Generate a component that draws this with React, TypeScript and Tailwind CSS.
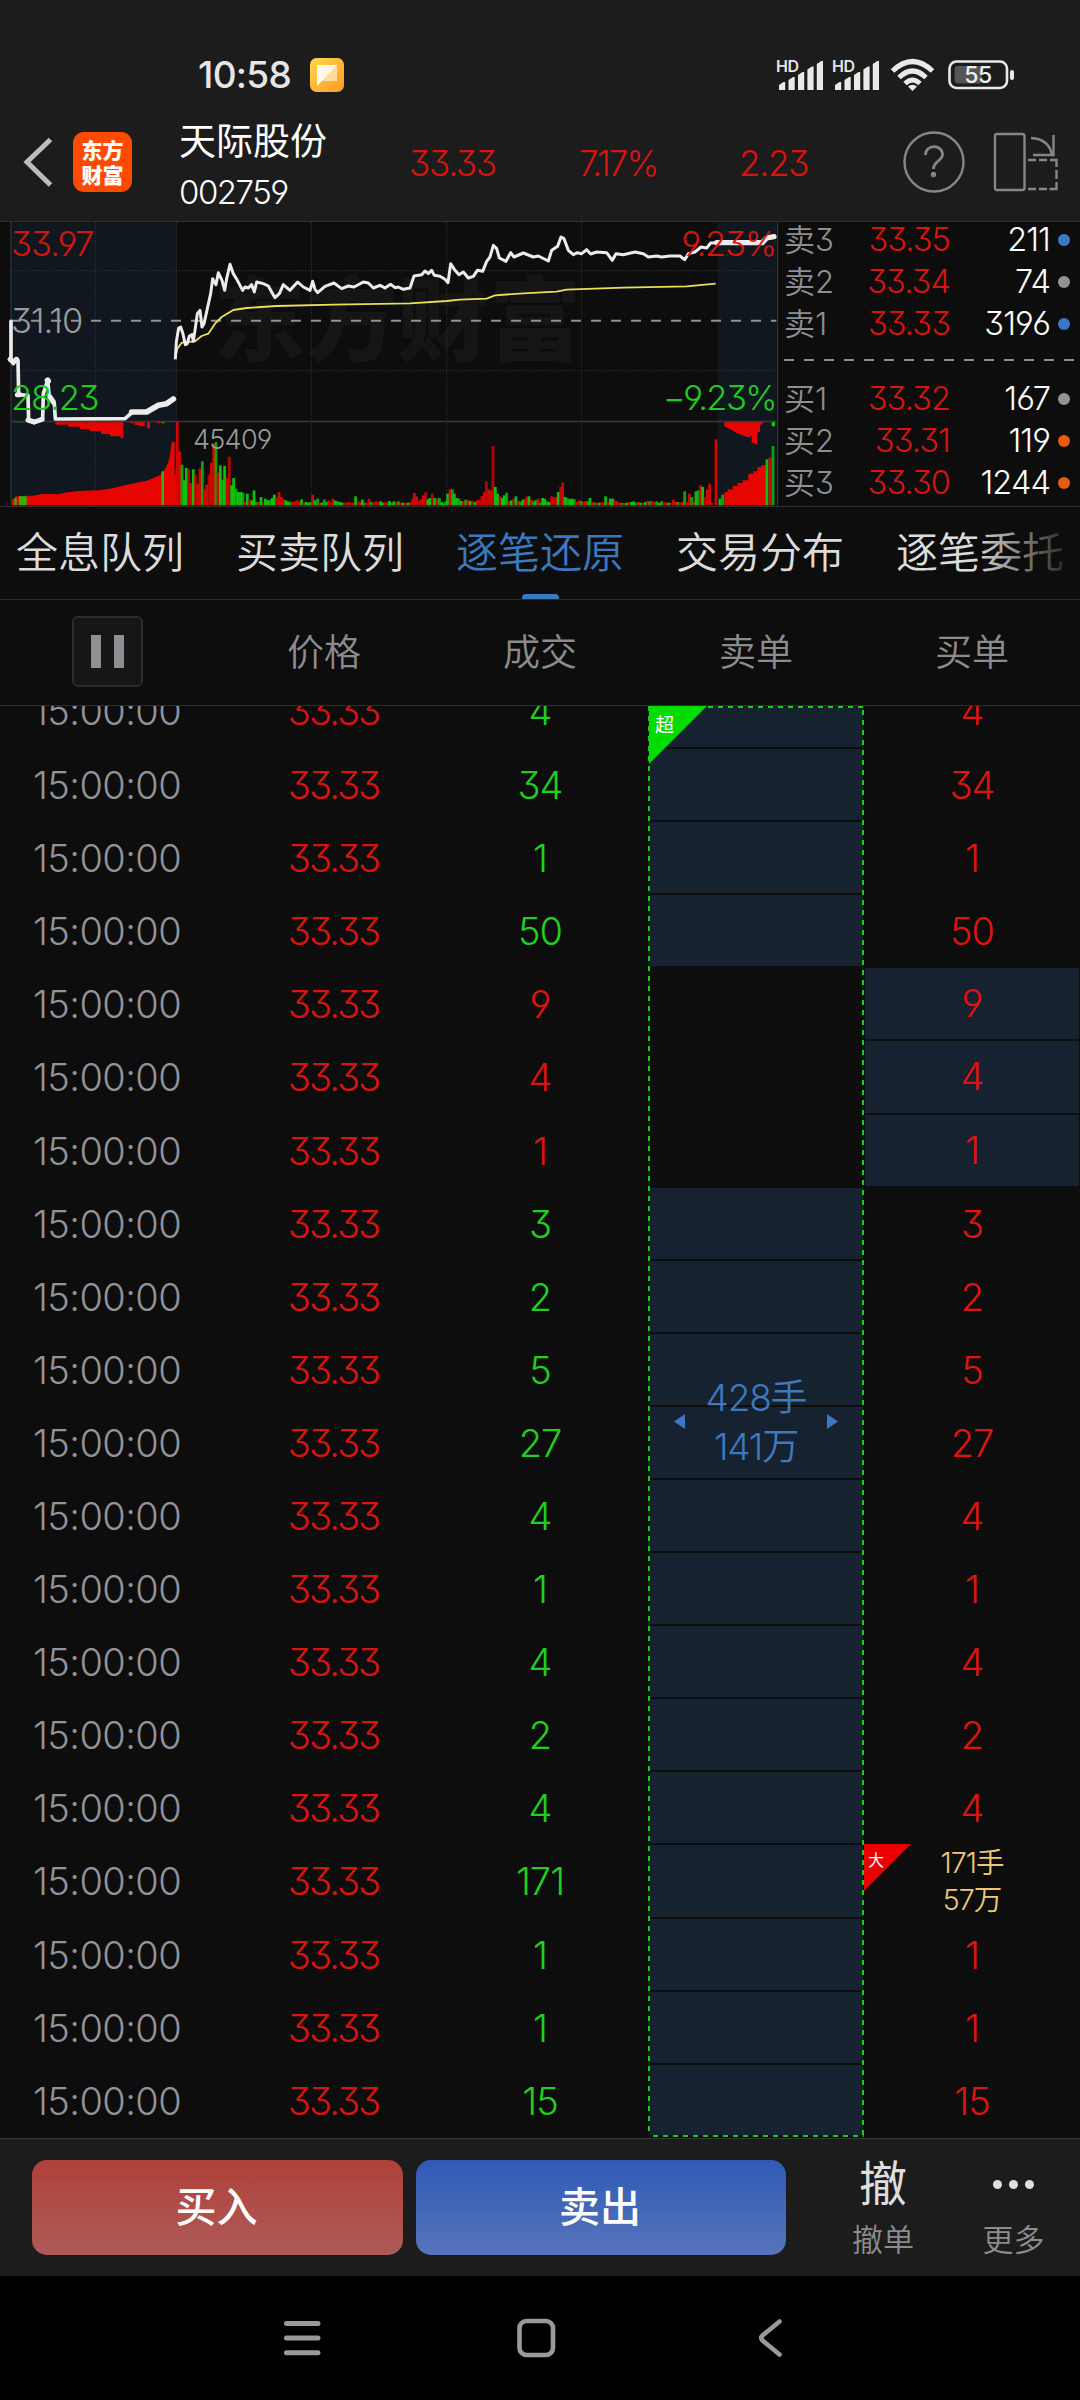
import React from 'react';

type Bar = [number, number, 'r' | 'g'];

const RED = '#e60500';
const GREEN = '#0cd20c';

const quotes = [
  { label: '卖3', price: '33.35', qty: '211', dot: 'bg-[#3b78c4]' },
  { label: '卖2', price: '33.34', qty: '74', dot: 'bg-[#929297]' },
  { label: '卖1', price: '33.33', qty: '3196', dot: 'bg-[#3b78c4]' },
  { label: '买1', price: '33.32', qty: '167', dot: 'bg-[#929297]' },
  { label: '买2', price: '33.31', qty: '119', dot: 'bg-[#e65c0c]' },
  { label: '买3', price: '33.30', qty: '1244', dot: 'bg-[#e65c0c]' },
];

const tabs = ['全息队列', '买卖队列', '逐笔还原', '交易分布', '逐笔委托'];

// `tall` rows take the extra pixel of the fractional row pitch.
const ticks: { vol: string; buy?: boolean; big?: boolean; tall?: boolean }[] = [
  { vol: '4', tall: true }, { vol: '34' }, { vol: '1' }, { vol: '50' },
  { vol: '9', buy: true }, { vol: '4', buy: true, tall: true }, { vol: '1', buy: true },
  { vol: '3' }, { vol: '2' }, { vol: '5' }, { vol: '27' }, { vol: '4' }, { vol: '1' },
  { vol: '4' }, { vol: '2' }, { vol: '4' }, { vol: '171', big: true, tall: true }, { vol: '1' },
  { vol: '1' }, { vol: '15' },
];

// Minute volume bars: x, top, colour. The chart grid uses thirds of a pixel.
const volume: Bar[] = [
  [532, 620, 'r'], [539, 708, 'r'], [546, 748, 'g'], [553, 795, 'g'], [559, 758, 'g'], [566, 762, 'r'],
  [573, 803, 'r'], [580, 762, 'g'], [586, 778, 'r'], [593, 805, 'r'], [600, 760, 'r'], [607, 738, 'g'],
  [613, 822, 'r'], [620, 808, 'r'], [627, 778, 'r'], [634, 742, 'r'], [641, 685, 'r'], [648, 680, 'g'],
  [654, 772, 'r'], [661, 750, 'g'], [668, 793, 'g'], [674, 752, 'g'], [681, 788, 'r'], [688, 724, 'r'],
  [695, 810, 'g'], [701, 788, 'g'], [708, 820, 'g'], [715, 830, 'g'], [722, 830, 'g'], [729, 832, 'g'],
  [735, 860, 'r'], [742, 835, 'g'], [749, 852, 'r'], [756, 855, 'g'], [762, 825, 'g'], [769, 860, 'g'],
  [776, 860, 'r'], [783, 845, 'g'], [790, 862, 'r'], [796, 850, 'g'], [803, 855, 'g'], [810, 853, 'g'],
  [817, 848, 'g'], [823, 838, 'g'], [830, 845, 'r'], [837, 830, 'r'], [844, 845, 'r'], [850, 850, 'r'],
  [857, 855, 'g'], [864, 858, 'g'], [871, 860, 'g'], [878, 860, 'r'], [885, 858, 'r'], [892, 855, 'r'],
  [898, 858, 'r'], [905, 852, 'g'], [912, 862, 'r'], [918, 860, 'g'], [925, 862, 'g'], [932, 860, 'g'],
  [938, 838, 'r'], [945, 855, 'g'], [953, 850, 'g'], [959, 862, 'r'], [966, 862, 'g'], [973, 852, 'g'],
  [980, 860, 'g'], [986, 855, 'r'], [993, 860, 'r'], [999, 850, 'r'], [1006, 856, 'g'], [1013, 858, 'g'],
  [1020, 860, 'g'], [1026, 862, 'g'], [1033, 862, 'r'], [1040, 862, 'r'], [1047, 860, 'r'], [1054, 862, 'r'],
  [1060, 862, 'r'], [1067, 843, 'g'], [1074, 858, 'r'], [1081, 860, 'r'], [1087, 853, 'g'], [1094, 862, 'g'],
  [1101, 862, 'r'], [1107, 850, 'r'], [1114, 860, 'g'], [1121, 862, 'r'], [1128, 858, 'r'], [1135, 860, 'r'],
  [1142, 858, 'g'], [1148, 862, 'g'], [1155, 860, 'r'], [1162, 862, 'r'], [1168, 857, 'g'], [1175, 862, 'g'],
  [1182, 858, 'g'], [1189, 860, 'r'], [1196, 858, 'g'], [1203, 862, 'r'], [1210, 862, 'g'], [1217, 862, 'r'],
  [1224, 862, 'g'], [1231, 860, 'r'], [1237, 850, 'r'], [1243, 833, 'r'], [1250, 843, 'r'], [1256, 856, 'r'],
  [1263, 852, 'r'], [1270, 840, 'r'], [1277, 830, 'r'], [1284, 852, 'g'], [1290, 848, 'g'], [1297, 835, 'r'],
  [1304, 848, 'g'], [1311, 850, 'r'], [1318, 848, 'g'], [1325, 860, 'g'], [1332, 864, 'g'], [1337, 858, 'g'],
  [1343, 835, 'g'], [1350, 822, 'r'], [1357, 822, 'g'], [1363, 835, 'g'], [1370, 848, 'g'], [1377, 850, 'g'],
  [1384, 857, 'g'], [1390, 858, 'r'], [1397, 853, 'g'], [1404, 853, 'r'], [1411, 857, 'g'], [1418, 856, 'r'],
  [1425, 860, 'g'], [1432, 855, 'r'], [1439, 853, 'r'], [1446, 842, 'r'], [1453, 830, 'r'], [1459, 798, 'r'],
  [1466, 822, 'r'], [1473, 825, 'r'], [1479, 692, 'r'], [1486, 815, 'g'], [1493, 835, 'g'], [1500, 843, 'r'],
  [1507, 848, 'g'], [1513, 840, 'g'], [1520, 832, 'g'], [1527, 858, 'r'], [1534, 855, 'g'], [1541, 850, 'r'],
  [1548, 843, 'g'], [1555, 857, 'r'], [1562, 859, 'g'], [1569, 853, 'g'], [1576, 850, 'r'], [1581, 843, 'r'],
  [1587, 843, 'g'], [1594, 853, 'r'], [1601, 858, 'g'], [1607, 855, 'g'], [1614, 850, 'r'], [1621, 862, 'g'],
  [1628, 848, 'g'], [1634, 850, 'g'], [1641, 858, 'g'], [1648, 860, 'g'], [1655, 843, 'r'], [1662, 845, 'r'],
  [1669, 845, 'r'], [1675, 830, 'g'], [1682, 815, 'r'], [1688, 802, 'r'], [1695, 845, 'g'], [1702, 848, 'g'],
  [1709, 852, 'g'], [1716, 850, 'g'], [1723, 852, 'g'], [1730, 860, 'r'], [1737, 855, 'r'], [1744, 857, 'g'],
  [1751, 860, 'r'], [1757, 857, 'r'], [1764, 858, 'g'], [1770, 848, 'g'], [1777, 860, 'r'], [1784, 862, 'g'],
  [1791, 862, 'r'], [1798, 862, 'g'], [1805, 860, 'r'], [1811, 862, 'r'], [1817, 843, 'g'], [1824, 860, 'r'],
  [1831, 850, 'g'], [1838, 850, 'g'], [1845, 855, 'r'], [1852, 858, 'r'], [1859, 862, 'r'], [1866, 863, 'g'],
  [1873, 863, 'r'], [1880, 862, 'g'], [1887, 860, 'r'], [1894, 860, 'g'], [1901, 858, 'g'], [1908, 862, 'g'],
  [1915, 860, 'r'], [1922, 862, 'g'], [1929, 862, 'r'], [1936, 860, 'g'], [1943, 857, 'r'], [1950, 858, 'g'],
  [1957, 857, 'r'], [1964, 860, 'r'], [1971, 858, 'g'], [1978, 863, 'g'], [1985, 858, 'g'], [1992, 860, 'r'],
  [1999, 862, 'r'], [2006, 862, 'g'], [2013, 863, 'r'], [2020, 853, 'r'], [2027, 860, 'r'], [2034, 860, 'g'],
  [2041, 862, 'r'], [2048, 860, 'r'], [2054, 828, 'g'], [2061, 860, 'r'], [2068, 835, 'r'], [2075, 845, 'g'],
  [2082, 860, 'r'], [2088, 828, 'g'], [2095, 825, 'g'], [2102, 810, 'r'], [2108, 815, 'g'], [2115, 845, 'r'],
  [2122, 822, 'r'], [2129, 805, 'r'], [2136, 862, 'r'], [2148, 672, 'r'], [2160, 850, 'g'], [2168, 838, 'g'],
  [2301, 732, 'g'], [2310, 726, 'r'], [2319, 692, 'g'],
];

const priceLine =
  '526,432 529,380 536,338 542,335 548,352 556,388 562,385 568,362 576,358 580,378 585,345 592,295 600,285 606,335 612,325 622,280 632,235 638,190 648,208 655,172 666,195 674,225 680,190 690,147 700,175 712,195 728,225 735,215 745,218 755,208 763,230 770,200 790,205 805,212 815,230 825,247 838,235 850,208 870,225 893,200 910,215 930,225 938,198 945,222 953,232 975,213 1002,203 1025,220 1045,212 1062,215 1090,200 1105,203 1120,218 1140,210 1155,218 1172,207 1185,217 1195,215 1210,222 1230,218 1242,182 1265,178 1275,167 1285,175 1295,165 1303,180 1320,183 1335,192 1344,202 1352,145 1365,165 1377,178 1390,170 1405,188 1420,183 1432,165 1448,168 1460,138 1470,125 1480,90 1490,100 1498,128 1518,138 1532,112 1542,125 1570,113 1600,125 1615,122 1645,137 1655,105 1673,93 1683,65 1692,70 1705,105 1720,118 1732,112 1745,115 1760,103 1772,116 1790,110 1820,112 1837,135 1848,115 1870,118 1905,110 1930,115 1945,125 1970,122 1985,125 2010,122 2040,122 2054,133 2065,115 2085,110 2103,95 2120,98 2132,83 2150,82';

const averageLine =
  '526,425 532,400 545,382 585,378 605,362 625,355 645,325 665,305 700,284 740,278 830,272 1000,268 1230,264 1340,257 1380,253 1460,250 1485,240 1570,234 1670,229 1700,223 1870,217 2060,213 2147,205';

const openingLine =
  '33,318 33,432 40,445 48,430 54,435 56,538 84,540 86,614 103,622 128,610 130,535 143,495 148,545 163,565 166,611 375,610 398,590 440,590 475,570 500,565 520,551';

function Chart() {
  return (
    <svg className="absolute inset-0" width="777" height="284" viewBox="0 20 2331 852">
      <rect x="33" y="21" width="496" height="849" fill="#10171f" />
      <rect x="2153" y="21" width="176" height="849" fill="#10171f" />
      <text
        x="640" y="415" fontSize="276" fontWeight="900" fill="#151515"
        className="font-['Noto_Sans_CJK_SC',sans-serif]"
      >
        东方财富
      </text>
      <g stroke="#333538" strokeWidth="3" strokeDasharray="4 5">
        {[286, 529, 934, 1340, 1745].map((x) => <line key={x} x1={x} x2={x} y1="21" y2="870" />)}
        {[166, 466].map((y) => <line key={y} x1="33" x2="2329" y1={y} y2={y} />)}
      </g>
      <line x1="33" x2="33" y1="21" y2="870" stroke="#2c2c2e" strokeWidth="5" />
      <line x1="33" x2="2329" y1="316.500" y2="316.500" stroke="#929292" strokeWidth="6" strokeDasharray="30 30" />

      <path
        d="M36 870 V850 H45 V843 H80 V841 H100 L125 836 H150 L175 837 L200 831 L250 826 L300 825 L340 818 L380 808 L440 796 L480 780 L498 757 L508 730 L515 680 H524 V780 H530 V870 Z"
        fill={RED}
      />
      <path d="M57 843H80V870H57ZM43 848H50V870H43ZM484 768H492V870H484Z" fill={GREEN} opacity="0.85" />
      <path
        d="M2173 870V830H2183V822H2198V812H2213V803H2228V795H2245V775H2260V768H2272V756H2283V750H2298V870Z"
        fill={RED}
      />
      {volume.map(([x, top, c], i) => (
        <rect key={i} x={x - 4.2} y={top} width="8.400" height={870 - top} fill={c === 'r' ? RED : GREEN} opacity={i % 3 === 2 ? 0.75 : 0.9} />
      ))}
      <path d="M166 620V628H205V634H240V641H270V648H303V656H330V663H362V669H370V620Z" fill={RED} />
      <path d="M390 620V624H405V629H418V633H434V620ZM441 620H450V639H441ZM470 620H485V624H470Z" fill={RED} />
      <path d="M2173 620V633L2215 655L2250 668V660H2255V682H2263V687H2272V650H2280V630L2290 624V620Z" fill={RED} />
      <path d="M2315 620H2325V633H2315ZM486 620H493V624H486ZM45 618H75V621H45Z" fill={GREEN} />

      <line x1="33" x2="2329" y1="618.500" y2="618.500" stroke="#38383a" strokeWidth="5" />
      <polyline points={averageLine} fill="none" stroke="#e9e05a" strokeWidth="5.500" strokeLinejoin="round" />
      <polyline points={priceLine} fill="none" stroke="#ececec" strokeWidth="9" strokeLinejoin="round" />
      <g fill="none" stroke="#ececec" strokeLinejoin="round" strokeLinecap="round">
        <polyline points={openingLine} strokeWidth="11" />
        <polyline points="395,590 440,590 475,570 500,565 520,551" strokeWidth="17" />
        <polyline points="84,614 103,620 126,612" strokeWidth="15" />
        <polyline points="30,432 40,440 50,432" strokeWidth="15" />
        <polyline points="52,538 60,538" strokeWidth="15" />
        <polyline points="143,495 144,497" strokeWidth="18" />
        <polyline points="150,545 160,560" strokeWidth="15" />
        <polyline points="2150,82 2287,82 2300,68 2322,64" strokeWidth="16" />
      </g>
    </svg>
  );
}

function StatusBar() {
  const signal = (x: number) => (
    <g key={x} transform={`translate(${x} 0)`}>
      {[[0, 82], [9.5, 77], [19, 72], [28.400, 66.500], [37.800, 61]].map(([dx, y]) => (
        <path key={dx} d={`M${dx} 90V${y + 3}L${dx + 4.5} ${y}H${dx + 6.200}V90Z`} />
      ))}
    </g>
  );
  return (
    <div className="relative h-[110px]">
      <span className="absolute left-[198px] top-[55px] text-[37px] leading-[40px] font-medium tracking-[-0.7px] text-[#e6e6e6]">10:58</span>
      <span className="absolute left-[776px] top-[57px] text-[16px] leading-[18px] font-semibold tracking-[-0.5px] text-[#e6e6e6]">HD</span>
      <span className="absolute left-[832px] top-[57px] text-[16px] leading-[18px] font-semibold tracking-[-0.5px] text-[#e6e6e6]">HD</span>
      <svg className="absolute inset-0" width="1080" height="110" fill="#e9e9e9">
        <defs>
          <linearGradient id="note" x1="0" y1="0" x2="1" y2="1">
            <stop offset="0" stopColor="#ffd84a" />
            <stop offset="1" stopColor="#ff9a28" />
          </linearGradient>
        </defs>
        <rect x="310" y="58" width="34" height="34" rx="6.500" fill="url(#note)" />
        <path d="M317 65H337V81H322L317 86Z" fill="#ffdc9c" />
        <path d="M317 65H337L317 86Z" fill="#fff8e8" />
        {signal(779)}
        {signal(835)}
        <g fill="none" stroke="#e9e9e9" strokeWidth="5">
          <path d="M892.500 71Q912.500 52 932.500 71" />
          <path d="M899 77.500Q912.500 64.500 926 77.500" />
          <path d="M905 83.500Q912.500 76.500 920 83.500" />
        </g>
        <path d="M908 86.500Q912.500 83 917 86.500L912.500 91Z" />
        <rect x="949.500" y="61.500" width="57.500" height="26.500" rx="7" fill="none" stroke="#e9e9e9" strokeWidth="2.600" />
        <rect x="954.600" y="66" width="27.500" height="17.500" rx="3" fill="#555" />
        <rect x="1010" y="70" width="4" height="10" rx="2" />
      </svg>
      <span className="absolute left-[950px] top-[63px] w-[56px] text-center text-[23px] leading-[24px] font-medium tracking-[-0.5px] text-[#efefef]">55</span>
    </div>
  );
}

function Header() {
  return (
    <div className="flex h-[111px] items-start text-[#d81410]">
      <svg className="mt-[24px] ml-[20px] shrink-0" width="36" height="56" viewBox="20 134 36 56" fill="none" stroke="#bcbcbc" strokeWidth="5">
        <path d="M50.500 139.500L27 162L50.500 185" />
      </svg>
      <div className="mt-[22px] ml-[17px] flex h-[60px] w-[59px] shrink-0 flex-col items-center justify-center rounded-[11px] bg-[#ff4a00] font-['Noto_Sans_CJK_SC',sans-serif] text-[21px] leading-[25px] font-black text-white">
        <span>东方</span>
        <span>财富</span>
      </div>
      <div className="mt-[5px] ml-[47px] flex w-[230px] shrink-0 flex-col text-white">
        <span className="pt-[1px] text-[37px] leading-[51px]">天际股份</span>
        <span className="text-[33px] leading-[50px] font-[350] tracking-[-1.5px]">002759</span>
      </div>
      <div className="mt-[28px] flex w-[491px] shrink-0 text-[35px] leading-[50px] font-[350]">
        <span className="w-[170px] tracking-[-1.3px]">33.33</span>
        <span className="w-[160px] tracking-[-2px]">7.17%</span>
        <span className="tracking-[-1.2px]">2.23</span>
      </div>
      <svg className="shrink-0" width="180" height="111" viewBox="900 110 180 111" fill="none" stroke="#868686">
        <circle cx="934" cy="162" r="29.500" strokeWidth="2.400" />
        <path d="M925.500 155C925.500 144 942.500 144 942.500 154.500C942.500 161 933.500 161 933.500 169" strokeWidth="2.800" />
        <circle cx="933.500" cy="174.500" r="2.700" fill="#868686" stroke="none" />
        <rect x="995" y="134" width="29.500" height="56" rx="2" strokeWidth="2.400" />
        <path d="M1031 138Q1049 139 1052 155" strokeWidth="2.600" />
        <path d="M1053.500 135V155H1033" strokeWidth="2.400" />
        <path d="M1028 160H1036M1039 160H1047M1050 160H1056.500V167M1056.500 170V179M1056.500 182V189H1049.500M1028 189H1036M1039 189H1047" strokeWidth="2.400" />
      </svg>
    </div>
  );
}

function QuoteRow({ q }: { q: (typeof quotes)[number] }) {
  return (
    <div className="flex h-[42px] items-center text-[32.500px] leading-[42px] font-[350]">
      <span className="w-[66px] text-[31px] text-[#8f8f92]">{q.label}</span>
      <span className="w-[100px] text-right tracking-[-0.9px] text-[#d81410]">{q.price}</span>
      <span className="w-[100px] text-right tracking-[-0.9px] text-white">{q.qty}</span>
      <span className={`mt-[-1px] ml-[8px] h-[12px] w-[12px] rounded-full ${q.dot}`} />
    </div>
  );
}

export default function App() {
  return (
    <div className="flex h-[2400px] w-[1080px] flex-col overflow-hidden bg-[#0d0d0d] font-['Inter','Noto_Sans_CJK_SC',sans-serif] [font-feature-settings:'cv09','cv03','cv04']">
      <div className="h-[221px] shrink-0 bg-[#1c1c1c]">
        <StatusBar />
        <Header />
      </div>

      <div className="flex h-[286px] shrink-0 border-y border-[#303032]">
        <div className="relative w-[778px] shrink-0 border-r border-[#3a3a3c] text-[34.500px] leading-[40px] font-[350]">
          <Chart />
          <span className="absolute left-[11px] top-[2px] tracking-[-0.9px] text-[#d81410]">33.97</span>
          <span className="absolute left-[11px] top-[79px] tracking-[-1px] text-[#9a9a9a]">31.10</span>
          <span className="absolute left-[11px] top-[156px] tracking-[-1.2px] text-[#1fcc1f]">28.23</span>
          <span className="absolute right-[1px] top-[2px] tracking-[-1.2px] text-[#d81410]">9.23%</span>
          <span className="absolute right-[1px] top-[156px] tracking-[-1.6px] text-[#1fcc1f]">−9.23%</span>
          <span className="absolute left-[193px] top-[198px] text-[27px] tracking-[-0.7px] text-[#9a9a9a]">45409</span>
        </div>
        <div className="pl-[6px]">
          <div className="mt-[-3px]">
            {quotes.slice(0, 3).map((q) => <QuoteRow key={q.label} q={q} />)}
          </div>
          <div className="mt-[14px] mb-[17px] h-[2px] w-[290px] bg-[repeating-linear-gradient(90deg,#8e8e90_0_10px,transparent_10px_20px)]" />
          {quotes.slice(3).map((q) => <QuoteRow key={q.label} q={q} />)}
        </div>
      </div>

      <div className="relative flex h-[93px] shrink-0 gap-[52px] overflow-hidden border-b border-[#2c2c2e] pl-[16px] text-[42px] leading-[91px] whitespace-nowrap text-[#dcdcdc]">
        {tabs.map((t, i) => (
          <span key={t} className={i === 2 ? 'relative w-[168px] shrink-0 font-[350] text-[#3b78be]' : 'w-[168px] shrink-0 font-[350]'}>
            {t}
            {i === 2 && <i className="absolute bottom-0 left-[66px] h-[5px] w-[37px] rounded-t-[4px] bg-[#3b78c4]" />}
          </span>
        ))}
        <div className="absolute top-0 right-0 h-[91px] w-[105px] bg-linear-to-r from-[#0d0d0d]/0 to-[#0d0d0d]" />
      </div>

      <div className="grid h-[106px] shrink-0 grid-cols-5 items-center border-b border-[#2c2c2e] text-center text-[37px] leading-[50px] font-[350] text-[#8c8c8f]">
        <div className="mt-[-2px] mr-[1px] flex justify-center">
          <div className="flex h-[71px] w-[71px] items-center justify-center gap-[13px] rounded-[6px] border-2 border-[#2c2c2e] bg-[#161616]">
            <i className="h-[33px] w-[10px] bg-[#8e8e93]" />
            <i className="h-[33px] w-[10px] bg-[#8e8e93]" />
          </div>
        </div>
        <span>价格</span>
        <span>成交</span>
        <span>卖单</span>
        <span>买单</span>
      </div>

      <div className="relative h-[1432px] shrink-0 overflow-hidden">
        <div className="mt-[-31px] text-center text-[38px] leading-[73px] font-[350]">
          {ticks.map((t, i) => (
            <div key={i} className={t.tall ? 'grid h-[74px] grid-cols-5' : 'grid h-[73px] grid-cols-5'}>
              <span className="pr-[2px] tracking-[-0.6px] text-[#929297]">15:00:00</span>
              <span className="pl-[19px] tracking-[-2px] text-[#d81410]">33.33</span>
              <span className={t.buy ? 'tracking-[-1px] text-[#de1410]' : 'tracking-[-1px] text-[#20d020]'}>{t.vol}</span>
              <span className={t.buy ? '' : 'mx-[1px] mb-[2px] bg-[#162230]'} />
              {t.big ? (
                <span className="mt-[-1px] flex flex-col text-[28.500px] leading-[37px] tracking-[-1px] text-[#f0c778]">
                  <span>171手</span>
                  <span>57万</span>
                </span>
              ) : (
                <span className={t.buy ? 'mx-[1px] mb-[2px] bg-[#162230] leading-[71px] tracking-[-1px] text-[#de1410]' : 'tracking-[-1px] text-[#de1410]'}>{t.vol}</span>
              )}
            </div>
          ))}
        </div>
        <div className="absolute top-0 left-[648px] h-[1431px] w-[216px]">
          <i className="absolute top-0 left-0 h-full w-[2px] bg-[repeating-linear-gradient(180deg,#22c722_0_5px,#0a1a10_5px_10px)]" />
          <i className="absolute top-0 right-0 h-full w-[2px] bg-[repeating-linear-gradient(180deg,transparent_0_4px,#22c722_4px_9px,#0a1a10_9px_10px)]" />
          <i className="absolute top-0 left-0 h-[2px] w-full bg-[repeating-linear-gradient(90deg,#22c722_0_5px,#0a1a10_5px_10px)]" />
          <i className="absolute bottom-0 left-0 h-[2px] w-full bg-[repeating-linear-gradient(90deg,#0a1a10_0_5px,#22c722_5px_10px)]" />
          <i className="absolute top-0 left-[1px] h-[58px] w-[58px] bg-[#00dc00] [clip-path:polygon(0_0,100%_0,0_100%)]" />
          <span className="absolute top-[9px] left-[7px] text-[19px] leading-[21px] text-white">超</span>
          <i className="absolute top-[708px] left-[26px] h-[15px] w-[11px] bg-[#3b78c4] [clip-path:polygon(100%_0,100%_100%,0_50%)]" />
          <i className="absolute top-[708px] left-[179px] h-[15px] w-[11px] bg-[#3b78c4] [clip-path:polygon(0_0,0_100%,100%_50%)]" />
          <div className="absolute top-[667px] left-0 flex w-full flex-col text-center text-[37px] leading-[49px] font-[350] tracking-[-1.2px] text-[#3e79bd]">
            <span>428手</span>
            <span>141万</span>
          </div>
        </div>
        <i className="absolute top-[1138px] left-[864px] h-[47px] w-[47px] bg-[#ea0000] [clip-path:polygon(0_0,100%_0,0_100%)]" />
        <span className="absolute top-[1144px] left-[868px] text-[16px] leading-[20px] text-white">大</span>
      </div>

      <div className="flex h-[138px] shrink-0 items-start border-t border-[#38383a] bg-[#1c1c1c] pt-[21px] pl-[32px] text-white">
        <button className="h-[95px] w-[371px] rounded-[15px] bg-linear-to-b from-[#b0403a] to-[#ae5a58] pr-[2px] text-[41px] font-medium">买入</button>
        <button className="ml-[13px] h-[95px] w-[370px] rounded-[15px] bg-linear-to-b from-[#305ab6] to-[#5674ba] pr-[2px] text-[41px] font-medium">卖出</button>
        <div className="ml-[32px] flex w-[130px] flex-col items-center">
          <span className="text-[48px] leading-[48px] text-[#dedede]">撤</span>
          <span className="mt-[12px] text-[31px] leading-[40px] font-[350] text-[#8c8c8f]">撤单</span>
        </div>
        <div className="flex w-[131px] flex-col items-center">
          <div className="flex h-[48px] items-center gap-[7px]">
            <i className="h-[9px] w-[9px] rounded-full bg-[#dedede]" />
            <i className="h-[9px] w-[9px] rounded-full bg-[#dedede]" />
            <i className="h-[9px] w-[9px] rounded-full bg-[#dedede]" />
          </div>
          <span className="mt-[12px] text-[31px] leading-[40px] font-[350] text-[#8c8c8f]">更多</span>
        </div>
      </div>

      <div className="flex h-[124px] shrink-0 bg-black">
        <svg width="1080" height="124" viewBox="0 2276 1080 124" fill="none" stroke="#9a9a9a" strokeWidth="5" strokeLinecap="round" strokeLinejoin="round">
          <path d="M286.500 2323.500H318M286.500 2338H318M286.500 2352.700H318" />
          <rect x="519.500" y="2321" width="33.500" height="34" rx="7" strokeWidth="4.600" />
          <path d="M779.500 2321.500L762.500 2335.500Q760 2338 762.500 2340.500L779.500 2354.500" strokeWidth="4.600" />
        </svg>
      </div>
    </div>
  );
}
